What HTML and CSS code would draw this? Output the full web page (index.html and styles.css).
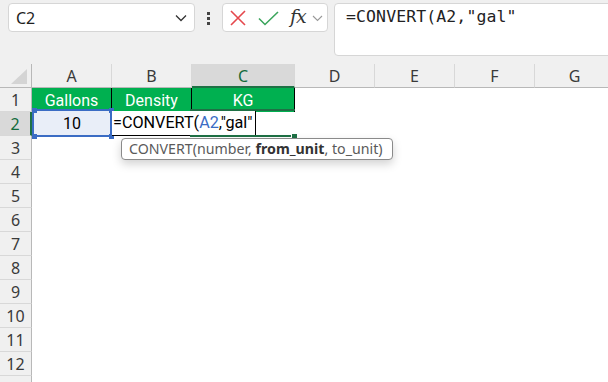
FILE: index.html
```html
<!DOCTYPE html>
<html>
<head>
<meta charset="utf-8">
<link rel="stylesheet" href="styles.css">
</head>
<body>
<div class="app">
  <div class="toolbar">
    <div class="namebox">
      <span class="ref">C2</span>
      <svg class="chev" width="12" height="8" viewBox="0 0 12 8"><path d="M1 1.5 L6 6.5 L11 1.5" fill="none" stroke="#333" stroke-width="1.3"/></svg>
    </div>
    <div class="dots"><i></i><i></i><i></i></div>
    <div class="fxbox">
      <svg class="btn-x" width="16" height="16" viewBox="0 0 16 16"><path d="M1 1 L15 15 M15 1 L1 15" stroke="#e5484d" stroke-width="1.6" fill="none"/></svg>
      <svg class="btn-ok" width="21" height="15" viewBox="0 0 21 15"><path d="M1 7.5 L7 13.5 L20 1" stroke="#3ba55c" stroke-width="1.6" fill="none"/></svg>
      <span class="fx">fx</span>
      <svg class="chev2" width="11" height="7" viewBox="0 0 11 7"><path d="M1 1 L5.5 5.5 L10 1" fill="none" stroke="#999" stroke-width="1.1"/></svg>
    </div>
    <div class="formula">=CONVERT(A2,"gal"</div>
  </div>

  <div class="sheet">
    <div class="corner"><span class="tri"></span></div>
    <div class="ch">A</div><div class="ch">B</div><div class="ch ch-active">C</div><div class="ch">D</div><div class="ch">E</div><div class="ch">F</div><div class="ch">G</div>

    <div class="rh">1</div><div class="hdr">Gallons</div><div class="hdr">Density</div><div class="hdr">KG</div><div></div><div></div><div></div><div></div>
    <div class="rh rh-active">2</div><div></div><div></div><div></div><div></div><div></div><div></div><div></div>
    <div class="rh">3</div><div></div><div></div><div></div><div></div><div></div><div></div><div></div>
    <div class="rh">4</div><div></div><div></div><div></div><div></div><div></div><div></div><div></div>
    <div class="rh">5</div><div></div><div></div><div></div><div></div><div></div><div></div><div></div>
    <div class="rh">6</div><div></div><div></div><div></div><div></div><div></div><div></div><div></div>
    <div class="rh">7</div><div></div><div></div><div></div><div></div><div></div><div></div><div></div>
    <div class="rh">8</div><div></div><div></div><div></div><div></div><div></div><div></div><div></div>
    <div class="rh">9</div><div></div><div></div><div></div><div></div><div></div><div></div><div></div>
    <div class="rh">10</div><div></div><div></div><div></div><div></div><div></div><div></div><div></div>
    <div class="rh">11</div><div></div><div></div><div></div><div></div><div></div><div></div><div></div>
    <div class="rh">12</div><div></div><div></div><div></div><div></div><div></div><div></div><div></div>
    <div class="rh"></div><div></div><div></div><div></div><div></div><div></div><div></div><div></div>

    <div class="refbox">10<i class="h tl"></i><i class="h tr"></i><i class="h bl"></i><i class="h br"></i></div>
    <div class="editor">=CONVERT(<span class="a2">A2</span>,"gal"</div>
    <div class="sel-top"></div>
    <div class="sel-bot"></div>
    <div class="sel-handle"></div>
    <div class="tip">CONVERT(number, <b>from_unit</b>, to_unit)</div>
  </div>
</div>
</body>
</html>
```
FILE: styles.css
```css
html, body {
  margin: 0;
  padding: 0;
  background: #ffffff;
}
.app {
  width: 608px;
  height: 382px;
  overflow: hidden;
  font-family: "Noto Sans", "Open Sans", sans-serif;
}
.toolbar {
  height: 64px;
  background: #f0f0f0;
  display: flex;
  align-items: flex-start;
  padding: 3px 0 0 8px;
  box-sizing: border-box;
}
.toolbar > * {
  flex: none;
}
.namebox {
  width: 187px;
  height: 29px;
  box-sizing: border-box;
  background: #fff;
  border: 1px solid #d6d6d6;
  border-radius: 4px;
  display: flex;
  align-items: center;
  justify-content: space-between;
  padding: 0 7px 0 7px;
}
.ref {
  font-size: 16px;
  color: #1f1f1f;
}
.chev { margin-top: 1px; }
.dots {
  width: 3px;
  margin: 9px 12px 0 12px;
  display: flex;
  flex-direction: column;
  gap: 2px;
}
.dots i {
  display: block;
  width: 3px;
  height: 3px;
  background: #444;
}
.fxbox {
  width: 106px;
  height: 29px;
  box-sizing: border-box;
  background: #fff;
  border: 1px solid #d6d6d6;
  border-radius: 4px;
  display: flex;
  align-items: center;
  padding-left: 7px;
}
.btn-x { margin-right: 12px; }
.btn-ok { margin-right: 11px; margin-top: 1px; }
.fx {
  font-family: "DejaVu Serif", "Liberation Serif", serif;
  font-style: italic;
  font-size: 19px;
  color: #333;
  letter-spacing: -1px;
  margin-top: -3px;
  margin-right: 6px;
}
.chev2 { margin-top: 2px; }
.formula {
  margin-left: 6px;
  width: 300px;
  height: 53px;
  box-sizing: border-box;
  background: #fff;
  border: 1px solid #d6d6d6;
  border-radius: 4px;
  padding: 3px 0 0 11px;
  font-family: "DejaVu Sans Mono", "Liberation Mono", monospace;
  font-size: 16.5px;
  color: #222;
  letter-spacing: 0.1px;
}

.sheet {
  position: relative;
  display: grid;
  grid-template-columns: 32px 80px 80px 103px 80px 80px 80px 80px;
  grid-template-rows: repeat(14, 24px);
  background: #fff;
}
.sheet > div {
  box-sizing: border-box;
}
.corner {
  background: #f0f0f0;
  border-right: 1px solid #b8b8b8;
  border-bottom: 1px solid #b8b8b8;
  position: relative;
}
.tri {
  position: absolute;
  right: 4px;
  bottom: 3px;
  width: 0;
  height: 0;
  border-left: 16px solid transparent;
  border-bottom: 15px solid #d4d4d4;
}
.ch {
  background: #f0f0f0;
  border-right: 1px solid #d8d8d8;
  border-bottom: 1px solid #b8b8b8;
  display: flex;
  align-items: center;
  justify-content: center;
  font-size: 16px;
  color: #3a3a3a;
  padding-top: 1px;
}
.ch-active {
  background: #d9d9d9;
  color: #136b3c;
  border-bottom: 2px solid #1e7145;
  padding-top: 2px;
}
.rh {
  background: #f0f0f0;
  border-right: 1px solid #b8b8b8;
  border-bottom: 1px solid #d8d8d8;
  display: flex;
  align-items: center;
  justify-content: center;
  font-size: 16px;
  color: #3a3a3a;
}
.rh-active {
  background: #d9d9d9;
  color: #136b3c;
  border-right: 2px solid #1e7145;
}
.hdr {
  background: #00b050;
  color: #fff;
  border-right: 1px solid #000;
  display: flex;
  align-items: center;
  justify-content: center;
  font-family: Roboto, "Noto Sans", sans-serif;
  font-size: 16px;
}
.refbox {
  position: absolute;
  left: 32px;
  top: 45px;
  width: 80px;
  height: 28px;
  box-sizing: border-box;
  border: 2px solid #3b6cc4;
  background: #e9eef8;
  display: flex;
  align-items: center;
  justify-content: center;
  font-family: Roboto, "Noto Sans", sans-serif;
  font-size: 16px;
  color: #000;
}
.h {
  position: absolute;
  width: 5px;
  height: 5px;
  background: #3b6cc4;
}
.tl { left: -2px; top: -3px; }
.tr { right: -4px; top: -3px; }
.bl { left: -2px; bottom: -4px; }
.br { right: -4px; bottom: -4px; }
.editor {
  position: absolute;
  left: 112px;
  top: 47px;
  width: 144px;
  height: 25px;
  box-sizing: border-box;
  background: #fff;
  border-right: 1px solid #000;
  border-bottom: 1px solid #000;
  font-family: Roboto, "Noto Sans", sans-serif;
  font-size: 16.2px;
  color: #000;
  line-height: 24px;
  padding-left: 1px;
  white-space: nowrap;
}
.a2 { color: #3b6cc4; }
.sel-top {
  position: absolute;
  left: 190px;
  top: 45px;
  width: 105px;
  height: 2px;
  background: #1e7145;
}
.sel-bot {
  position: absolute;
  left: 190px;
  top: 71px;
  width: 103px;
  height: 2px;
  background: #1e7145;
}
.sel-handle {
  position: absolute;
  left: 292px;
  top: 70px;
  width: 5px;
  height: 5px;
  background: #1e7145;
  outline: 1px solid #fff;
}
.tip {
  position: absolute;
  left: 121px;
  top: 74px;
  width: 272px;
  height: 22px;
  box-sizing: border-box;
  background: #fff;
  border: 1px solid #8a8a8a;
  border-radius: 4px;
  box-shadow: 0 4px 10px rgba(0,0,0,0.18);
  font-family: "Noto Sans", "Open Sans", sans-serif;
  font-size: 14.2px;
  color: #5a5a5a;
  line-height: 19px;
  padding-left: 7px;
  white-space: nowrap;
}
.tip b {
  color: #333;
  font-weight: 700;
}
```
